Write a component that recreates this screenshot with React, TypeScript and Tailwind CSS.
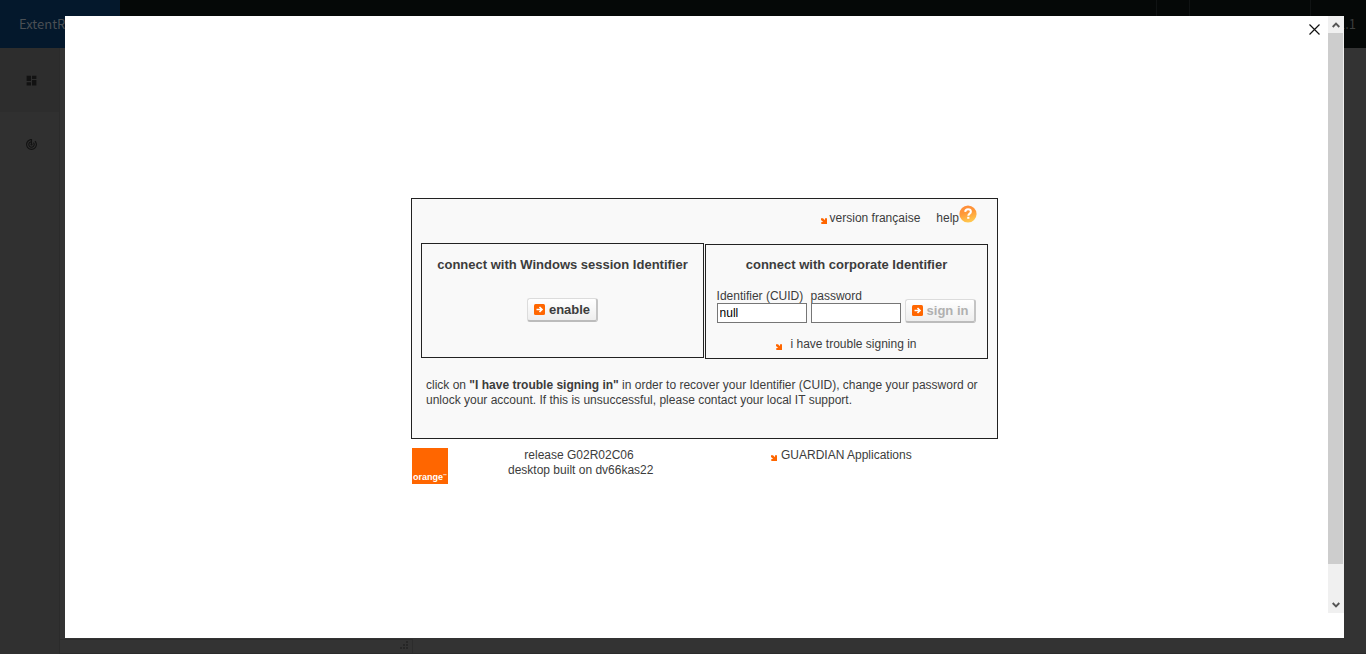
import React from "react";
import { MdDashboard, MdTrackChanges } from "react-icons/md";

function CornerArrow() {
  return (
    <svg width="6" height="6" viewBox="0 0 6 6" aria-hidden="true" className="shrink-0">
      <path d="M0 0.300h2L4 2.200V0.300h2V6H0.300V4H2.200L0 1.900z" fill="#ff6600" />
    </svg>
  );
}

function SquareArrow() {
  return (
    <svg width="11" height="11" viewBox="0 0 11 11" aria-hidden="true" className="shrink-0">
      <rect width="11" height="11" rx="1.5" fill="#ff6600" />
      <path d="M2.5 5.5h5M5.5 3l2.5 2.5L5.5 8" fill="none" stroke="#fff" strokeWidth="1.6" />
    </svg>
  );
}

function HelpIcon() {
  return (
    <svg width="18" height="18" viewBox="0 0 18 18" aria-hidden="true" className="shrink-0">
      <defs>
        <linearGradient id="help-fill" x1="0" y1="0" x2="0.3" y2="1">
          <stop offset="0" stopColor="#ff8a3c" />
          <stop offset="0.5" stopColor="#ff9838" />
          <stop offset="1" stopColor="#ffc54d" />
        </linearGradient>
      </defs>
      <circle cx="9" cy="9" r="8.6" fill="url(#help-fill)" />
      <path
        d="M6.2 6.9C6.3 5.2 7.4 4.3 9 4.3c1.7 0 2.9 1 2.9 2.4 0 1.9-2.6 2-2.6 4.1"
        fill="none"
        stroke="#fff"
        strokeWidth="2"
      />
      <rect x="8.2" y="11.8" width="2.2" height="2" fill="#fff" />
    </svg>
  );
}

function ImageButton({ label, disabled = false }: { label: string; disabled?: boolean }) {
  return (
    <button
      type="button"
      disabled={disabled}
      className={
        "flex h-6 items-center gap-1 rounded-[3px] border border-r-2 border-b-2 border-[#dcdcdc] border-r-[#c4c4c4] border-b-[#bcbcbc] bg-gradient-to-b from-white to-[#eeeeee] pr-1.5 pl-1.5 text-[13px] leading-4 font-bold " +
        (disabled ? "text-[#b0b0b0]" : "text-[#3c3c3c]")
      }
    >
      <SquareArrow />
      {label}
    </button>
  );
}

function Scrollbar() {
  return (
    <div className="mb-[25px] flex w-4 shrink-0 flex-col bg-[#f0f0f0]">
      <button type="button" aria-label="Scroll up" className="flex h-[17px] items-center justify-center">
        <svg width="8" height="6" viewBox="0 0 8 6" aria-hidden="true">
          <path d="M0.7 5 4 1.7 7.3 5" fill="none" stroke="#555" strokeWidth="1.9" />
        </svg>
      </button>
      <div className="mr-px grow bg-[#cdcdcd]" />
      <div className="h-8" />
      <button type="button" aria-label="Scroll down" className="flex h-[17px] items-center justify-center">
        <svg width="8" height="6" viewBox="0 0 8 6" aria-hidden="true">
          <path d="M0.7 1 4 4.3 7.3 1" fill="none" stroke="#555" strokeWidth="1.9" />
        </svg>
      </button>
    </div>
  );
}

function LoginPanel() {
  return (
    <section className="border border-[#222222] bg-[#f9f9f9] px-[9px] pb-[30px]">
      <div className="flex h-11 justify-end gap-4 pr-[11px]">
        <a href="#fr" className="flex items-center gap-[3px] pb-1.5">
          <span className="pt-1.5"><CornerArrow /></span>
          version française
        </a>
        <a href="#help" className="flex items-center pb-1.5">
          help
          <span className="pb-2"><HelpIcon /></span>
        </a>
      </div>

      <div className="grid grid-cols-2 gap-px">
        <div className="mb-px flex flex-col items-center border border-[#222222] pt-[13px]">
          <h2 className="text-[13px] leading-4 font-bold">connect with Windows session Identifier</h2>
          <div className="mt-[25px]">
            <ImageButton label="enable" />
          </div>
        </div>

        <form className="mt-px flex flex-col items-center border border-[#222222] pt-3 pb-1.5">
          <h2 className="text-[13px] leading-4 font-bold">connect with corporate Identifier</h2>
          <div className="mt-[17px] flex items-end gap-1">
            <div className="flex flex-col">
              <label htmlFor="cuid" className="leading-[13px]">Identifier (CUID)</label>
              <input
                id="cuid"
                defaultValue="null"
                className="h-5 w-[90px] border border-[#767676] bg-white px-0.5 text-black"
              />
            </div>
            <div className="flex flex-col">
              <label htmlFor="password" className="leading-[13px]">password</label>
              <input
                id="password"
                type="password"
                className="h-5 w-[90px] border border-[#767676] bg-white px-0.5 text-black"
              />
            </div>
            <ImageButton label="sign in" disabled />
          </div>
          <a href="#trouble" className="mt-3.5 flex items-center gap-2">
            <span className="pt-1"><CornerArrow /></span>
            i have trouble signing in
          </a>
        </form>
      </div>

      <p className="mt-[19px] pl-[5px]">
        click on <b>"I have trouble signing in"</b> in order to recover your Identifier (CUID), change your
        password or unlock your account. If this is unsuccessful, please contact your local IT support.
      </p>
    </section>
  );
}

function LoginFooter() {
  return (
    <footer className="mt-[9px] flex items-start pl-px">
      <div className="flex h-9 w-9 items-end justify-center bg-[#ff6600] pb-0.5 text-[9px] leading-[9px] font-bold text-white">
        orange
        <span className="self-end pb-1 text-[4px] leading-[5px]">™</span>
      </div>
      <p className="ml-[60px] w-[142px] text-center">
        release G02R02C06
        <br />
        <span className="whitespace-nowrap">desktop built on dv66kas22</span>
      </p>
      <a href="#guardian" className="ml-[121px] flex items-center gap-1">
        <span className="pt-1"><CornerArrow /></span>
        GUARDIAN Applications
      </a>
    </footer>
  );
}

function PreviewDialog() {
  return (
    <div
      role="dialog"
      aria-label="Screenshot preview"
      className="fixed inset-0 flex py-4 pr-[22px] pl-[65px]"
    >
      <div className="relative flex grow bg-white">
        <main className="flex grow justify-center pt-[182px] pl-4 font-['Liberation_Sans',Arial,sans-serif] text-[12px] leading-[15px] text-[#3c3c3c]">
          <div className="w-[587px]">
            <LoginPanel />
            <LoginFooter />
          </div>
        </main>
        <Scrollbar />
        <button type="button" aria-label="Close" className="absolute top-2 right-6">
          <svg width="11" height="11" viewBox="0 0 11 11" aria-hidden="true">
            <path d="M0.5 0.5l10 10M10.5 0.5l-10 10" stroke="#111" strokeWidth="1.2" />
          </svg>
        </button>
      </div>
    </div>
  );
}

export default function App() {
  return (
    <div className="flex min-h-screen flex-col bg-[#333333] font-['Noto_Sans_CJK_SC','Noto_Sans',sans-serif] text-[13px]">
      <header className="flex h-12 items-stretch bg-[#050807]">
        <a href="#home" className="flex w-[120px] items-center bg-[#04182c] pl-[19px] text-[#4a4f54]">
          ExtentReports
        </a>
        <div className="ml-auto flex text-[#3b3d3d]">
          <span className="w-[33px] border-l border-[#101313]" />
          <span className="w-[121px] border-l border-[#101313]" />
          <span className="flex w-14 items-center justify-end border-l border-[#101313] pr-2.5">v3.1.1</span>
        </div>
      </header>
      <div className="flex grow">
        <nav className="flex w-[60px] flex-col border-r border-[#2b2b2b] bg-[#303030]">
          <a href="#tests" aria-label="Tests" className="flex h-16 items-center justify-center bg-[#2d2d2d] pl-1 text-[#121212]">
            <MdDashboard size={13} />
          </a>
          <a href="#dashboard" aria-label="Dashboard" className="flex h-16 items-center justify-center pl-1 text-[#121212]">
            <MdTrackChanges size={13} />
          </a>
        </nav>
        <div className="flex grow flex-col border-b border-[#2b2b2b]">
          <div className="mt-auto flex h-[14px] w-[353px] items-end justify-end border-t border-r border-[#2c2c2c] pr-1 pb-1">
            <svg width="8" height="8" viewBox="0 0 8 8" fill="#262626" aria-hidden="true">
              <path d="M6 0h2v2H6zM3 3h2v2H3zM6 3h2v2H6zM0 6h2v2H0zM3 6h2v2H3zM6 6h2v2H6z" />
            </svg>
          </div>
        </div>
      </div>
      <PreviewDialog />
    </div>
  );
}
